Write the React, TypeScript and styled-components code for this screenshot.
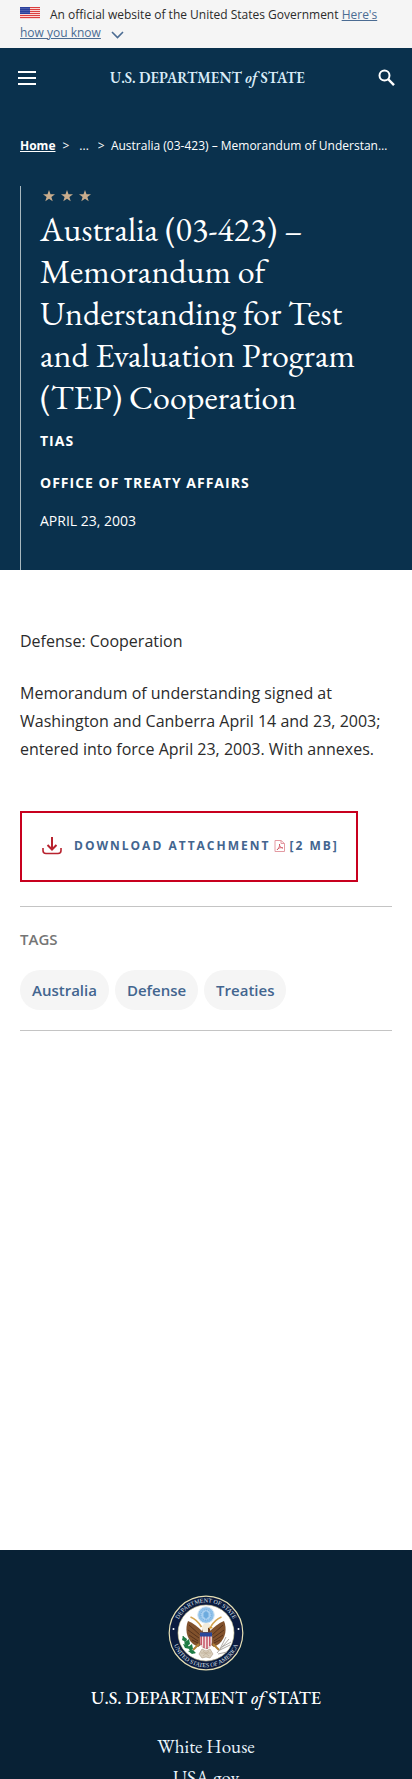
import React from "react";
import styled, { createGlobalStyle } from "styled-components";

const sans = `"Open Sans", "Noto Sans", sans-serif`;
const serif = `"EB Garamond", "Liberation Serif", serif`;

const GlobalStyle = createGlobalStyle`
  *, *::before, *::after { box-sizing: border-box; }
  html { overflow-x: hidden; }
  body {
    margin: 0;
    background: #fff;
    color: #2b2b2b;
    font-family: ${sans};
  }
  h1, p, ul, ol { margin: 0; padding: 0; }
  ul, ol { list-style: none; }
`;

const Page = styled.div`
  height: 100vh;
  overflow: hidden;
`;

const Banner = styled.section`
  background: #f5f5f5;
  padding: 6px 20px;
  font-size: 12px;
  line-height: 18px;
`;

const Flag = styled.svg`
  width: 20px;
  height: 12px;
  margin-right: 10px;
`;

const BannerLink = styled.a`
  color: #4b6c93;

  svg { margin-left: 10px; vertical-align: -3px; }
`;

const Header = styled.header`
  display: flex;
  align-items: center;
  justify-content: space-between;
  height: 60px;
  padding: 0 17px;
  background: #0a314d;
`;

const IconButton = styled.button`
  display: flex;
  border: 0;
  padding: 0;
  background: none;
  color: #fff;
  cursor: pointer;
`;

const Wordmark = styled.a<{ $large?: boolean }>`
  color: ${(p) => (p.$large ? "#fff" : "#d9ecf8")};
  font-family: ${serif};
  font-size: ${(p) => (p.$large ? 18 : 15)}px;
  font-weight: ${(p) => (p.$large ? 500 : 600)};
  line-height: 24px;
  text-decoration: none;
  white-space: nowrap;
`;

const Hero = styled.section`
  padding: 28px 20px 0;
  background: #0a314d;
  color: #fff;
`;

const Crumbs = styled.ol`
  display: flex;
  font-size: 12px;
  line-height: 20px;
  white-space: nowrap;

  a { color: #fff; font-weight: 700; }
  li:nth-child(2) {
    display: flex;
    gap: 10px;
    margin: 0 9px 0 7px;
  }
  li:last-child { overflow: hidden; text-overflow: ellipsis; }
`;

const Intro = styled.div`
  margin-top: 30px;
  padding: 4px 20px 37px 19px;
  border-left: 1px solid #a9b8bf;
`;

const Stars = styled.svg`
  display: block;
  width: 54px;
  height: 12px;
`;

const Title = styled.h1`
  margin: 6px 0 11px;
  font-family: ${serif};
  font-size: 34px;
  font-weight: 400;
  line-height: 42px;
`;

const Meta = styled.p<{ $strong?: boolean }>`
  margin-bottom: 18px;
  font-size: 14px;
  line-height: 24px;
  font-weight: ${(p) => (p.$strong ? 700 : 400)};
  letter-spacing: ${(p) => (p.$strong ? "1px" : "normal")};
  text-transform: uppercase;

  &:last-child { margin: -4px 0 0; }
`;

const Main = styled.main`
  padding: 57px 20px 519px;
`;

const Copy = styled.div`
  display: grid;
  gap: 24px;
  font-size: 16px;
  line-height: 28px;
`;

const Download = styled.a`
  display: flex;
  align-items: center;
  width: fit-content;
  height: 71px;
  margin-top: 48px;
  padding: 0 17px 2px 20px;
  border: 2px solid #c8001e;
  color: #43658f;
  font-size: 12px;
  font-weight: 700;
  letter-spacing: 2px;
  line-height: 20px;
  text-decoration: none;
  white-space: nowrap;

  svg { flex: none; }
`;

const DownloadIcon = styled.svg`
  width: 20px;
  height: 18px;
  margin-right: 12px;
`;

const PdfIcon = styled.svg`
  width: 11px;
  height: 12px;
  margin: 0 4px;
`;

const TagPanel = styled.section`
  margin-top: 24px;
  padding: 20px 0;
  border-top: 1px solid #c4c4c4;
  border-bottom: 1px solid #c4c4c4;
`;

const TagHeading = styled.h2`
  margin: 0 0 19px;
  color: #757575;
  font-size: 15px;
  font-weight: 600;
  line-height: 24px;
`;

const TagList = styled.ul`
  display: flex;
  flex-wrap: wrap;
  gap: 6px;
`;

const Tag = styled.a`
  display: block;
  padding: 8px 12px;
  border-radius: 20px;
  background: #f5f5f5;
  color: #43658f;
  font-size: 15px;
  font-weight: 600;
  line-height: 24px;
  text-decoration: none;
`;

const Footer = styled.footer`
  display: flex;
  flex-direction: column;
  align-items: center;
  gap: 15px;
  padding: 45px 20px 40px;
  background: #082135;
`;

const FooterLinks = styled.ul`
  margin-top: 6px;
  font-family: ${serif};
  font-size: 19px;
  line-height: 31px;
  text-align: center;

  a { color: #e9f4fb; text-decoration: none; }
`;

const starPath = "M6 0l1.5 4.2H12L8.4 6.9 9.7 11.3 6 8.7 2.3 11.3 3.6 6.9 0 4.2h4.5z";

function UsFlag() {
  return (
    <Flag viewBox="0 0 20 12" aria-hidden="true">
      <rect width="20" height="12" fill="#fff0ee" />
      {[0, 2, 4, 6, 8, 10].map((y) => (
        <rect key={y} y={y} width="20" height="1.15" fill="#db3e3e" />
      ))}
      <rect width="10" height="7" fill="#2a3f9b" />
      {[1, 3, 5].map((y) =>
        [1, 3, 5, 7, 9].map((x) => <circle key={`${x}-${y}`} cx={x} cy={y + 0.5} r=".4" fill="#b9c2ee" />)
      )}
    </Flag>
  );
}

function Seal() {
  return (
    <svg width="76" height="76" viewBox="0 0 76 76" role="img" aria-label="Department of State seal">
      <defs>
        <path id="seal-top" d="M7.5 38a30.5 30.5 0 0 1 61 0" />
        <path id="seal-bottom" d="M3.8 38a34.2 34.2 0 0 0 68.4 0" />
      </defs>
      <circle cx="38" cy="38" r="36.8" fill="#0b1b3f" stroke="#e6dfb4" strokeWidth="1.2" />
      <circle cx="38" cy="38" r="28" fill="#fff" stroke="#d9cf9b" strokeWidth=".6" />
      <g fill="#dfe5ee" fontFamily="Liberation Serif, serif" fontSize="6" textAnchor="middle">
        <text><textPath href="#seal-top" startOffset="50%">DEPARTMENT OF STATE</textPath></text>
        <text><textPath href="#seal-bottom" startOffset="50%">UNITED STATES OF AMERICA</textPath></text>
      </g>
      <circle cx="5.5" cy="34" r="1" fill="#fff" />
      <circle cx="70.5" cy="34" r="1" fill="#fff" />
      <circle cx="38" cy="20" r="8.3" fill="#8fc1ea" stroke="#d9e8f2" />
      <circle cx="38" cy="20" r="5.2" fill="#a9cff0" stroke="#5f9fd8" strokeWidth=".7" strokeDasharray="1 1" />
      <path d="M35.5 18l2.5-2 2.5 2v3.5L38 24l-2.5-2.5z" fill="#6dabde" />
      <path d="M22.5 22c5 2 8 5 11 10M53.5 22c-5 2-8 5-11 10" fill="none" stroke="#d3a452" strokeWidth="1.6" />
      <path d="M20 26c-3 7-2 17 5 23l5 3c2-1 4-3 4-7v-9c-4-4-9-8-14-10z" fill="#81512c" />
      <path d="M56 26c3 7 2 17-5 23l-5 3c-2-1-4-3-4-7v-9c4-4 9-8 14-10z" fill="#81512c" />
      <path d="M21 30l11 10M20 35l11 8M21 40l9 6M24 45l6 3M55 30L44 40M56 35l-11 8M55 40l-9 6M52 45l-6 3" stroke="#4a2b18" strokeWidth=".8" />
      <path d="M34 38c0-5 1-7 4-8 3 1 5 3 4 8z" fill="#6b4022" />
      <path d="M34 34c0-4 2-6 5-6 2 0 4 2 4 4l-3 1v4h-5z" fill="#f2ecdc" />
      <path d="M42 31l3 2-4 1z" fill="#d89a2c" />
      <path d="M32 38h12v9c0 4-3 6-6 7-3-1-6-3-6-7z" fill="#f3dfe0" stroke="#9c7c68" strokeWidth=".4" />
      <path d="M33.2 41v9M36 41v12M39 41v13M41.8 41v10" stroke="#b93248" strokeWidth="1.2" />
      <path d="M32 37.5h12v4H32z" fill="#28489c" />
      <path d="M31 49l-6 6M45 49l6 6" stroke="#b18137" strokeWidth="2" />
      <path d="M27 58c-6-3-10-9-12-17" fill="none" stroke="#26733f" />
      <path d="M15 41l4 3-1 3-4-2zM21 44l1 5-3 2-3-3zM15 49l5 1 2 4-5-1zM24 49l1 5-3 2-2-4zM20 56l5-1 3 3-4 1z" fill="#1f7c45" />
      <path d="M49 58l12-14M52 55l10-5M51 56l7-14M54 52l9-5M50 59l9-2" stroke="#a6a29c" strokeWidth=".9" />
      <path d="M34 54l-3 5 3 4 4-1 4 1 3-4-3-5-4 2z" fill="#d8cdbb" stroke="#ad9b83" strokeWidth=".6" />
      <path d="M33 58h10M35 61l6-5M41 61l-6-5" stroke="#b4a28a" strokeWidth=".5" />
    </svg>
  );
}

export default function App() {
  return (
    <Page>
      <GlobalStyle />
      <Banner>
        <UsFlag />
        An official website of the United States Government{" "}
        <BannerLink href="#how">
          Here's how you know
          <svg width="13" height="10" viewBox="0 0 13 10" fill="none" stroke="#4b6c93" strokeWidth="1.6" aria-hidden="true">
            <path d="M1 2l5.5 5.5L12 2" />
          </svg>
        </BannerLink>
      </Banner>

      <Header>
        <IconButton aria-label="Menu">
          <svg width="20" height="16" viewBox="0 0 20 16" fill="#fff">
            <path d="M1 1h18v2H1zM1 7h18v2H1zM1 13h18v2H1z" />
          </svg>
        </IconButton>
        <Wordmark href="#home">U.S. DEPARTMENT <i>of</i> STATE</Wordmark>
        <IconButton aria-label="Search">
          <svg width="17" height="18" viewBox="0 0 17 18" fill="none" stroke="#fff">
            <circle cx="6.5" cy="6.5" r="5" strokeWidth="2" />
            <path d="M10 10l6 6.2" strokeWidth="2.5" />
          </svg>
        </IconButton>
      </Header>

      <Hero>
        <nav aria-label="Breadcrumb">
          <Crumbs>
            <li><a href="#home">Home</a></li>
            <li><span>&gt;</span><span>...</span></li>
            <li>&gt;&nbsp; Australia (03-423) – Memorandum of Understanding for Test and Evaluation Program (TEP) Cooperation</li>
          </Crumbs>
        </nav>
        <Intro>
          <Stars viewBox="0 0 54 12" fill="#c9ad8d" aria-hidden="true">
            <path transform="translate(3 0)" d={starPath} />
            <path transform="translate(21 0)" d={starPath} />
            <path transform="translate(39 0)" d={starPath} />
          </Stars>
          <Title>Australia (03-423) – Memorandum of Understanding for Test and Evaluation Program (TEP) Cooperation</Title>
          <Meta $strong>TIAS</Meta>
          <Meta $strong>Office of Treaty Affairs</Meta>
          <Meta>April 23, 2003</Meta>
        </Intro>
      </Hero>

      <Main>
        <Copy>
          <p>Defense: Cooperation</p>
          <p>Memorandum of understanding signed at Washington and Canberra April 14 and 23, 2003; entered into force April 23, 2003. With annexes.</p>
        </Copy>
        <Download href="#attachment">
          <DownloadIcon viewBox="0 0 20 18" fill="none" stroke="#b8232f" strokeWidth="2" aria-hidden="true">
            <path d="M10 0v12M5.5 8l4.5 4.5L14.5 8" />
            <path d="M1 11v2.5Q1 16.5 4 16.5h12q3 0 3-3V11" strokeWidth="1.6" />
          </DownloadIcon>
          <span>DOWNLOAD ATTACHMENT</span>
          <PdfIcon viewBox="0 0 11 12" fill="none" stroke="#e39aa2" aria-hidden="true">
            <path d="M1 .5h6l3.5 3v8H1zM7 .5v3h3.5" />
            <path d="M3 10c2-2 3-4 2.5-6C5 6 7 8 9 8 7 7 4 8 3 10z" stroke="#cf4e5b" strokeWidth=".8" />
          </PdfIcon>
          <span>[2 MB]</span>
        </Download>

        <TagPanel>
          <TagHeading>TAGS</TagHeading>
          <TagList>
            {["Australia", "Defense", "Treaties"].map((tag) => (
              <li key={tag}><Tag href={`#${tag.toLowerCase()}`}>{tag}</Tag></li>
            ))}
          </TagList>
        </TagPanel>
      </Main>

      <Footer>
        <Seal />
        <Wordmark href="#home" $large>U.S. DEPARTMENT <i>of</i> STATE</Wordmark>
        <FooterLinks>
          <li><a href="#white-house">White House</a></li>
          <li><a href="#usa">USA.gov</a></li>
        </FooterLinks>
      </Footer>
    </Page>
  );
}
